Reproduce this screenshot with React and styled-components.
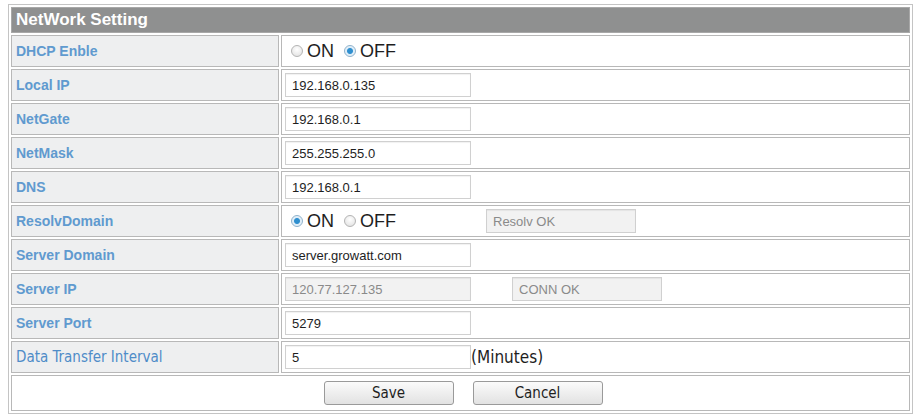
import React from "react";
import styled, { createGlobalStyle } from "styled-components";

const Global = createGlobalStyle`
  body {
    margin: 0;
    background: #ffffff;
    font-family: "Liberation Sans", Arial, sans-serif;
  }
`;

const Page = styled.div`
  padding: 4px 7px 0 8px;
`;

const Table = styled.table`
  width: 905px;
  border: 1px solid #c4c4c4;
  border-spacing: 2px;
  background: #ffffff;
`;

const HeadCell = styled.th`
  background: #8f9090;
  color: #ffffff;
  font-size: 17px;
  font-weight: bold;
  text-align: left;
  height: 24px;
  padding: 0 0 0 4px;
  border: 1px solid #a8a8a8;
`;

const Label = styled.td`
  width: 262px;
  height: 30px;
  background: #eeeff0;
  border: 1px solid #b8b8b8;
  padding: 0 0 0 4px;
  color: #609acf;
  font-size: 14px;
  font-weight: ${(p) => (p.$narrow ? "normal" : "bold")};
  ${(p) =>
    p.$narrow &&
    `font-family: "Liberation Sans Narrow", "DejaVu Sans Condensed", "Liberation Sans", sans-serif; font-size: 15px; color: #4f8cc8;`}
`;

const Value = styled.td`
  height: 30px;
  border: 1px solid #b8b8b8;
  padding: 0 0 0 3px;
  background: #ffffff;
`;

const Line = styled.div`
  display: flex;
  align-items: center;
`;

const RadioGroup = styled.div`
  display: flex;
  align-items: center;
  width: ${(p) => p.$w || 200}px;
`;

const Field = styled.input`
  width: 186px;
  height: 24px;
  box-sizing: border-box;
  border: 1px solid #d0d0d0;
  box-shadow: inset 0 1px 1px rgba(0, 0, 0, 0.06);
  padding: 0 6px;
  font-family: "Liberation Sans", Arial, sans-serif;
  font-size: 13px;
  color: #1e1e1e;
  background: #ffffff;
  outline: none;
  &:disabled {
    background: #f2f2f2;
    color: #8a8a8a;
  }
`;

const StatusBox = styled(Field)`
  width: 150px;
  margin-left: ${(p) => p.$gap || 0}px;
`;

const Radio = styled.input`
  appearance: none;
  width: 12px;
  height: 12px;
  margin: 0 4px 0 0;
  border-radius: 50%;
  border: 1px solid #b4b4b4;
  background: radial-gradient(circle at 50% 35%, #ffffff 0%, #dedede 100%);
  &:checked {
    background: radial-gradient(circle, #2f8fcf 0 2.5px, #dcecf8 3.5px, #f4f9fd 100%);
    border-color: #8fb2cc;
  }
`;

const Choice = styled.label`
  display: inline-flex;
  align-items: center;
  font-size: 18px;
  color: #1e1e1e;
  margin-left: ${(p) => p.$ml || 0}px;
`;

const Unit = styled.span`
  font-family: "Liberation Sans Narrow", "DejaVu Sans Condensed", "Liberation Sans", sans-serif;
  font-size: 17px;
  color: #1e1e1e;
`;

const ButtonCell = styled.td`
  height: 32px;
  border: 1px solid #b8b8b8;
  text-align: center;
`;

const Buttons = styled.div`
  display: flex;
  justify-content: center;
  gap: 19px;
  padding-left: 5px;
`;

const Button = styled.button`
  width: 130px;
  height: 24px;
  border: 1px solid #9a9a9a;
  border-radius: 3px;
  background: linear-gradient(#fbfbfb, #e2e2e2);
  font-family: "Liberation Sans Narrow", "DejaVu Sans Condensed", "Liberation Sans", sans-serif;
  font-size: 15px;
  color: #1e1e1e;
`;

function Radios({ on, width }) {
  return (
    <RadioGroup $w={width}>
      <Choice $ml={6}>
        <Radio type="radio" defaultChecked={on} name={"r" + on} />
        ON
      </Choice>
      <Choice $ml={10}>
        <Radio type="radio" defaultChecked={!on} name={"r" + on} />
        OFF
      </Choice>
    </RadioGroup>
  );
}

const inputs = [
  ["Local IP", "192.168.0.135"],
  ["NetGate", "192.168.0.1"],
  ["NetMask", "255.255.255.0"],
  ["DNS", "192.168.0.1"],
];

export default function App() {
  return (
    <Page>
      <Global />
      <Table>
        <tbody>
          <tr>
            <HeadCell colSpan={2}>NetWork Setting</HeadCell>
          </tr>
          <tr>
            <Label>DHCP Enble</Label>
            <Value>
              <Line>
                <Radios on={false} />
              </Line>
            </Value>
          </tr>
          {inputs.map(([name, val]) => (
            <tr key={name}>
              <Label>{name}</Label>
              <Value>
                <Field defaultValue={val} />
              </Value>
            </tr>
          ))}
          <tr>
            <Label>ResolvDomain</Label>
            <Value>
              <Line>
                <Radios on={true} width={201} />
                <StatusBox disabled defaultValue="Resolv OK" />
              </Line>
            </Value>
          </tr>
          <tr>
            <Label>Server Domain</Label>
            <Value>
              <Field defaultValue="server.growatt.com" />
            </Value>
          </tr>
          <tr>
            <Label>Server IP</Label>
            <Value>
              <Line>
                <Field disabled defaultValue="120.77.127.135" />
                <StatusBox $gap={41} disabled defaultValue="CONN OK" />
              </Line>
            </Value>
          </tr>
          <tr>
            <Label>Server Port</Label>
            <Value>
              <Field defaultValue="5279" />
            </Value>
          </tr>
          <tr>
            <Label $narrow>Data Transfer Interval</Label>
            <Value>
              <Line>
                <Field defaultValue="5" />
                <Unit>(Minutes)</Unit>
              </Line>
            </Value>
          </tr>
          <tr>
            <ButtonCell colSpan={2}>
              <Buttons>
                <Button>Save</Button>
                <Button>Cancel</Button>
              </Buttons>
            </ButtonCell>
          </tr>
        </tbody>
      </Table>
    </Page>
  );
}
